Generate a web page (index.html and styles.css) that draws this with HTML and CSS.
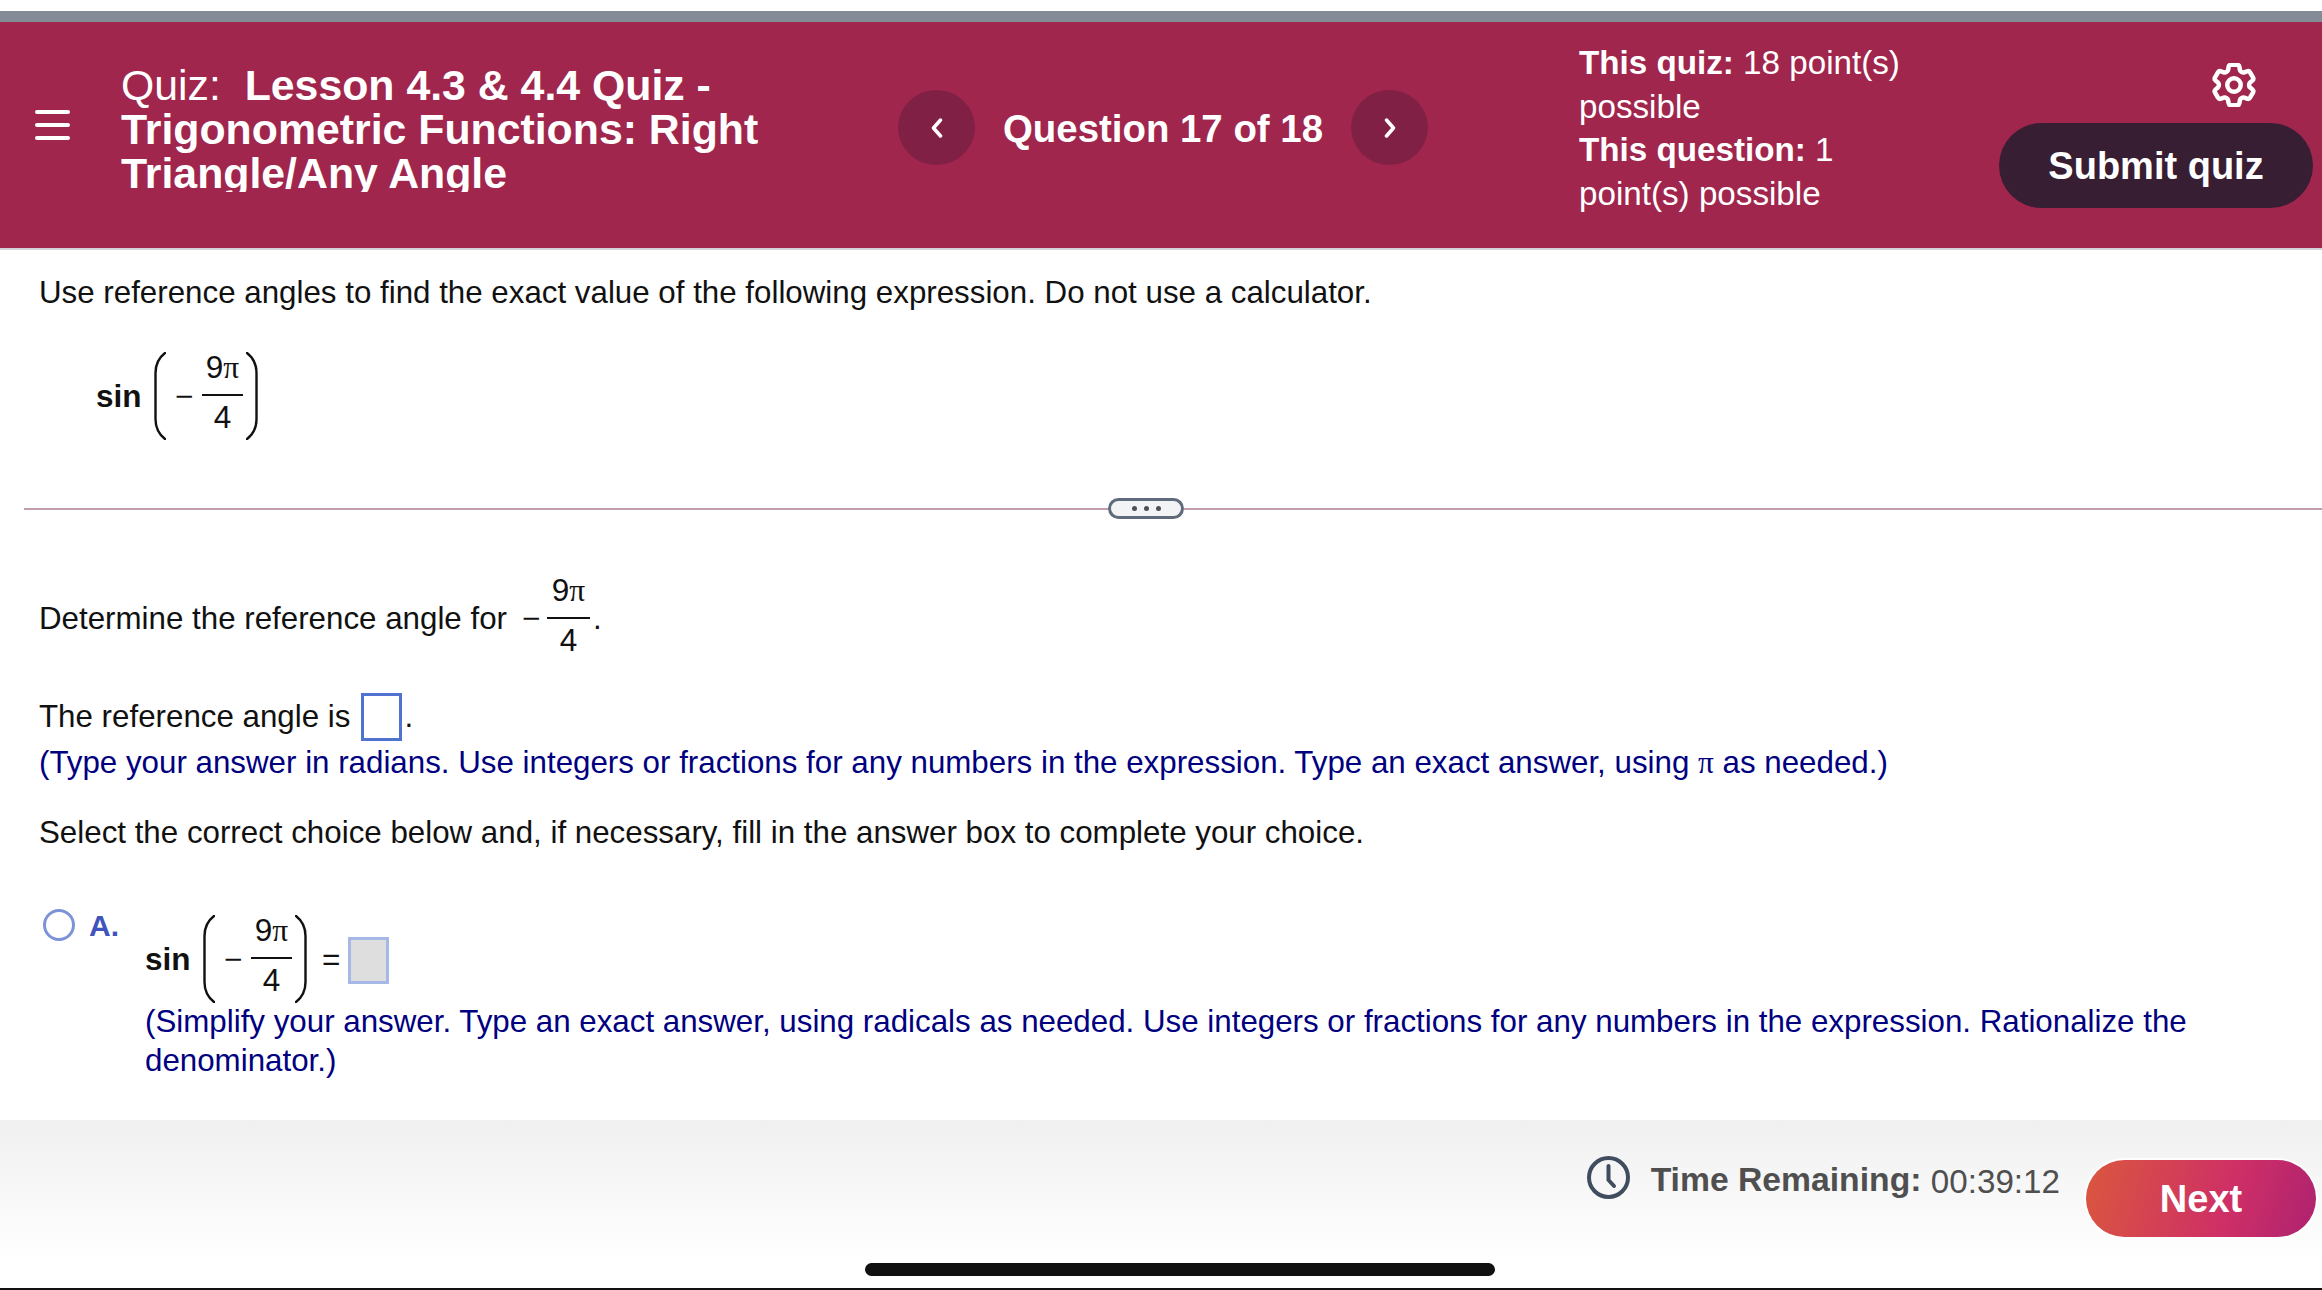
FILE: index.html
```html
<!DOCTYPE html>
<html lang="en">
<head>
<meta charset="utf-8">
<title>Quiz</title>
<link rel="stylesheet" href="styles.css">
</head>
<body>
<div class="page">
  <div class="topbar"></div>
  <header class="header">
    <div class="burger"><span></span><span></span><span></span></div>
    <h1 class="title">Quiz:&nbsp; <b>Lesson 4.3 &amp; 4.4 Quiz - Trigonometric Functions: Right Triangle/Any Angle</b></h1>
    <nav class="qnav">
      <button class="qbtn"><svg class="chev" viewBox="0 0 12 20"><path d="M9.5 2 2.5 10l7 8"/></svg></button>
      <span class="qlabel">Question 17 of 18</span>
      <button class="qbtn"><svg class="chev" viewBox="0 0 12 20"><path d="M2.5 2 9.5 10l-7 8"/></svg></button>
    </nav>
    <div class="points"><b>This quiz:</b> 18 point(s) possible<br><b>This question:</b> 1 point(s) possible</div>
    <div class="actions">
      <svg class="gear" viewBox="2.2 2.4 19.6 19.2"><path d="M9.594 3.94c.09-.542.56-.94 1.11-.94h2.593c.55 0 1.02.398 1.11.94l.213 1.281c.063.374.313.686.645.87.074.04.147.083.22.127.325.196.72.257 1.075.124l1.217-.456a1.125 1.125 0 0 1 1.37.49l1.296 2.247a1.125 1.125 0 0 1-.26 1.431l-1.003.827c-.293.241-.438.613-.43.992a7.723 7.723 0 0 1 0 .255c-.008.378.137.75.43.991l1.004.827c.424.35.534.955.26 1.43l-1.298 2.247a1.125 1.125 0 0 1-1.369.491l-1.217-.456c-.355-.133-.75-.072-1.076.124a6.47 6.47 0 0 1-.22.128c-.331.183-.581.495-.644.869l-.213 1.281c-.09.543-.56.94-1.11.94h-2.594c-.55 0-1.019-.398-1.11-.94l-.213-1.281c-.062-.374-.312-.686-.644-.87a6.52 6.52 0 0 1-.22-.127c-.325-.196-.72-.257-1.076-.124l-1.217.456a1.125 1.125 0 0 1-1.369-.49l-1.297-2.247a1.125 1.125 0 0 1 .26-1.431l1.004-.827c.292-.24.437-.613.43-.991a6.932 6.932 0 0 1 0-.255c.007-.38-.138-.751-.43-.992l-1.004-.827a1.125 1.125 0 0 1-.26-1.43l1.297-2.247a1.125 1.125 0 0 1 1.37-.491l1.216.456c.356.133.751.072 1.076-.124.072-.044.146-.086.22-.128.332-.183.582-.495.644-.869l.214-1.28Z"/><circle cx="12" cy="12" r="3"/></svg>
      <button class="submit">Submit quiz</button>
    </div>
  </header>

  <main class="main">
    <p class="line first">Use reference angles to find the exact value of the following expression. Do not use a calculator.</p>
    <div class="math math-top">
      <span class="fn">sin</span>
      <svg class="paren" viewBox="0 0 12 88"><path d="M11 1C4.500 6 1.500 13 1.500 21V67C1.500 75 4.500 82 11 87"/></svg>
      <span class="minus">&minus;</span>
      <span class="frac"><span class="num">9<span class="pi">&pi;</span></span><span class="den">4</span></span>
      <svg class="paren paren-r" viewBox="0 0 12 88"><path d="M1 1C7.500 6 10.500 13 10.500 21V67C10.500 75 7.500 82 1 87"/></svg>
    </div>

    <div class="rule"><span class="rule-left"></span><span class="pill"><i></i><i></i><i></i></span><span class="rule-right"></span></div>

    <div class="det">
      <span>Determine the reference angle for</span>
      <span class="minus minus-det">&minus;</span>
      <span class="frac frac-det"><span class="num">9<span class="pi">&pi;</span></span><span class="den">4</span></span>
      <span class="dot">.</span>
    </div>

    <div class="refline"><span>The reference angle is</span><span class="box"></span><span class="dot2">.</span></div>
    <p class="line hint hint-ref">(Type your answer in radians. Use integers or fractions for any numbers in the expression. Type an exact answer, using <span class="pi">&pi;</span> as needed.)</p>
    <p class="line select">Select the correct choice below and, if necessary, fill in the answer box to complete your choice.</p>

    <div class="choice">
      <span class="radio"></span>
      <span class="letter">A.</span>
      <div class="answer">
        <div class="math">
          <span class="fn">sin</span>
          <svg class="paren" viewBox="0 0 12 88"><path d="M11 1C4.500 6 1.500 13 1.500 21V67C1.500 75 4.500 82 11 87"/></svg>
          <span class="minus">&minus;</span>
          <span class="frac"><span class="num">9<span class="pi">&pi;</span></span><span class="den">4</span></span>
          <svg class="paren paren-r" viewBox="0 0 12 88"><path d="M1 1C7.500 6 10.500 13 10.500 21V67C10.500 75 7.500 82 1 87"/></svg>
          <span class="eq">=</span>
          <span class="box box-off"></span>
        </div>
        <p class="line hint">(Simplify your answer. Type an exact answer, using radicals as needed. Use integers or fractions for any numbers in the expression. Rationalize the denominator.)</p>
      </div>
    </div>
  </main>

  <footer class="footer">
    <div class="timer">
      <svg class="clock" viewBox="0 0 43 43"><circle cx="21.500" cy="21.500" r="19.500"/><path d="M21.500 10V24L27 30"/></svg>
      <span class="time"><b>Time Remaining:</b> <span class="clockval">00:39:12</span></span>
    </div>
    <button class="next">Next</button>
    <span class="homebar"></span>
  </footer>
</div>
</body>
</html>
```
FILE: styles.css
```css
* { box-sizing: border-box; }
html, body { margin: 0; padding: 0; background: #fff; }
body { font-family: "Liberation Sans", Arial, sans-serif; color: #111; }
button { font-family: inherit; border: 0; padding: 0; cursor: pointer; }

.page { width: 2322px; height: 1290px; display: flex; flex-direction: column; overflow: hidden; padding-top: 11px; }
.topbar { height: 11px; background: #838b97; flex: none; }

.header { flex: none; height: 228px; background: #a0264d; border-bottom: 2px solid #d3d2da; color: #fff; display: flex; align-items: flex-start; padding-right: 9px; }
.burger { margin: 88px 0 0 35px; width: 35px; height: 30px; display: flex; flex-direction: column; justify-content: space-between; flex: none; }
.burger span { display: block; height: 4px; border-radius: 2px; background: #fff; }
.title { margin: 41px 0 0 51px; width: 777px; padding-right: 110px; height: 129px; overflow: hidden; font-size: 42.800px; line-height: 44px; font-weight: 400; flex: none; }
.title b { font-weight: 700; }
.qnav { display: flex; align-items: center; margin-top: 68px; flex: none; }
.qbtn { width: 77px; height: 75px; border-radius: 50%; background: #802045; display: flex; align-items: center; justify-content: center; }
.chev { width: 12px; height: 20px; fill: none; stroke: #fff; stroke-width: 3.500; stroke-linecap: round; stroke-linejoin: round; }
.qlabel { font-size: 38.400px; font-weight: 700; width: 376px; text-align: center; padding-top: 2px; }
.points { margin: 19px 0 0 151px; width: 345px; font-size: 33.200px; line-height: 43.500px; flex: none; }
.actions { margin: 41px 0 0 auto; display: flex; flex-direction: column; align-items: flex-end; gap: 16px; flex: none; }
.gear { width: 44px; height: 44px; margin-right: 57px; fill: none; stroke: #fff; stroke-width: 2; stroke-linejoin: round; }
.submit { width: 314px; height: 85px; border-radius: 43px; background: #371e33; color: #fff; font-size: 38px; font-weight: 700; padding-top: 2px; }

.main { flex: 1; padding: 24px 0 0 39px; font-size: 31.300px; line-height: 38px; min-height: 0; }
.line { margin: 0; }
.hint { color: #000080; }
.hint-ref { margin-top: 3px; }
.select { margin-top: 32px; }
.pi { font-family: "Liberation Serif", "Times New Roman", serif; }

.math { display: flex; align-items: flex-start; height: 90px; font-size: 31.500px; line-height: 92px; }
.math-top { margin: 38px 0 0 57px; }
.fn { font-weight: 700; width: 58px; }
.paren { width: 12px; height: 88px; margin-top: 2px; fill: none; stroke: #111; stroke-width: 2.400; stroke-linecap: round; flex: none; }
.paren-r { margin-left: 3px; }
.minus { width: 36px; padding-left: 9px; flex: none; }
.frac { display: flex; flex-direction: column; width: 41px; text-align: center; line-height: 34px; flex: none; }
.num { padding-bottom: 10px; border-bottom: 2px solid #111; height: 46px; }
.den { padding-top: 4px; }
.eq { margin-left: 15px; width: 26px; }

.rule { display: flex; align-items: center; height: 21px; margin: 58px 0 0 -15px; }
.rule-left { width: 1084px; height: 2px; background: #c19cac; }
.rule-right { flex: 1; height: 2px; background: #c19cac; }
.pill { width: 76px; height: 21px; border: 3px solid #5f6b7c; border-radius: 11px; background: #f2f3f5; display: flex; align-items: center; justify-content: center; gap: 7px; flex: none; }
.pill i { width: 5px; height: 5px; border-radius: 50%; background: #4a4f58; }

.det { display: flex; align-items: flex-start; margin-top: 54px; height: 90px; line-height: 92px; }
.minus-det { width: 40px; padding-left: 15px; font-size: 31.500px; line-height: 90px; }
.frac-det { font-size: 31.500px; width: 43px; }
.dot { margin-left: 3px; }

.refline { display: flex; align-items: center; height: 48px; line-height: 48px; margin-top: 30px; }
.box { display: block; width: 41px; height: 48px; border: 3px solid #4f73cf; background: #fff; margin-left: 11px; flex: none; }
.dot2 { margin-left: 2px; }
.box-off { width: 41px; height: 47px; margin: 24px 0 0 0; background: #dedede; border-color: #a5b8e6; }

.choice { display: grid; grid-template-columns: 50px 56px 1fr; margin-top: 57px; }
.radio { width: 32px; height: 32px; border-radius: 50%; border: 3.500px solid #7d93d8; margin-left: 4px; background: #fff; }
.letter { font-size: 30px; line-height: 34px; font-weight: 700; color: #4054bb; }
.answer { padding-top: 4px; min-width: 0; }
.answer .hint { line-height: 38.500px; }

.footer { position: relative; flex: none; height: 170px; background: linear-gradient(to bottom, #f0f0f0 0, #fff 140px); border-bottom: 2px solid #111; display: flex; justify-content: flex-end; align-items: flex-start; gap: 26px; padding: 36px 6px 0 0; }
.timer { display: flex; align-items: flex-start; gap: 21px; color: #4f4f4f; }
.clock { width: 43px; height: 43px; fill: none; stroke: #3f4d5e; stroke-width: 4; stroke-linecap: round; stroke-linejoin: round; flex: none; }
.time { font-size: 33.700px; line-height: 43px; margin-top: 2px; white-space: nowrap; }
.clockval { font-size: 33.200px; vertical-align: -2px; }
.next { width: 230px; height: 77px; margin-top: 4px; border-radius: 39px; color: #fff; font-size: 38px; font-weight: 700; background: linear-gradient(105deg, #da573e 0%, #ce2f66 62%, #ae2270 100%); box-shadow: 0 0 0 2px rgba(255,255,255,.8); padding-top: 2px; }
.homebar { position: absolute; left: 865px; top: 143px; width: 630px; height: 13px; border-radius: 7px; background: #111; }
```
